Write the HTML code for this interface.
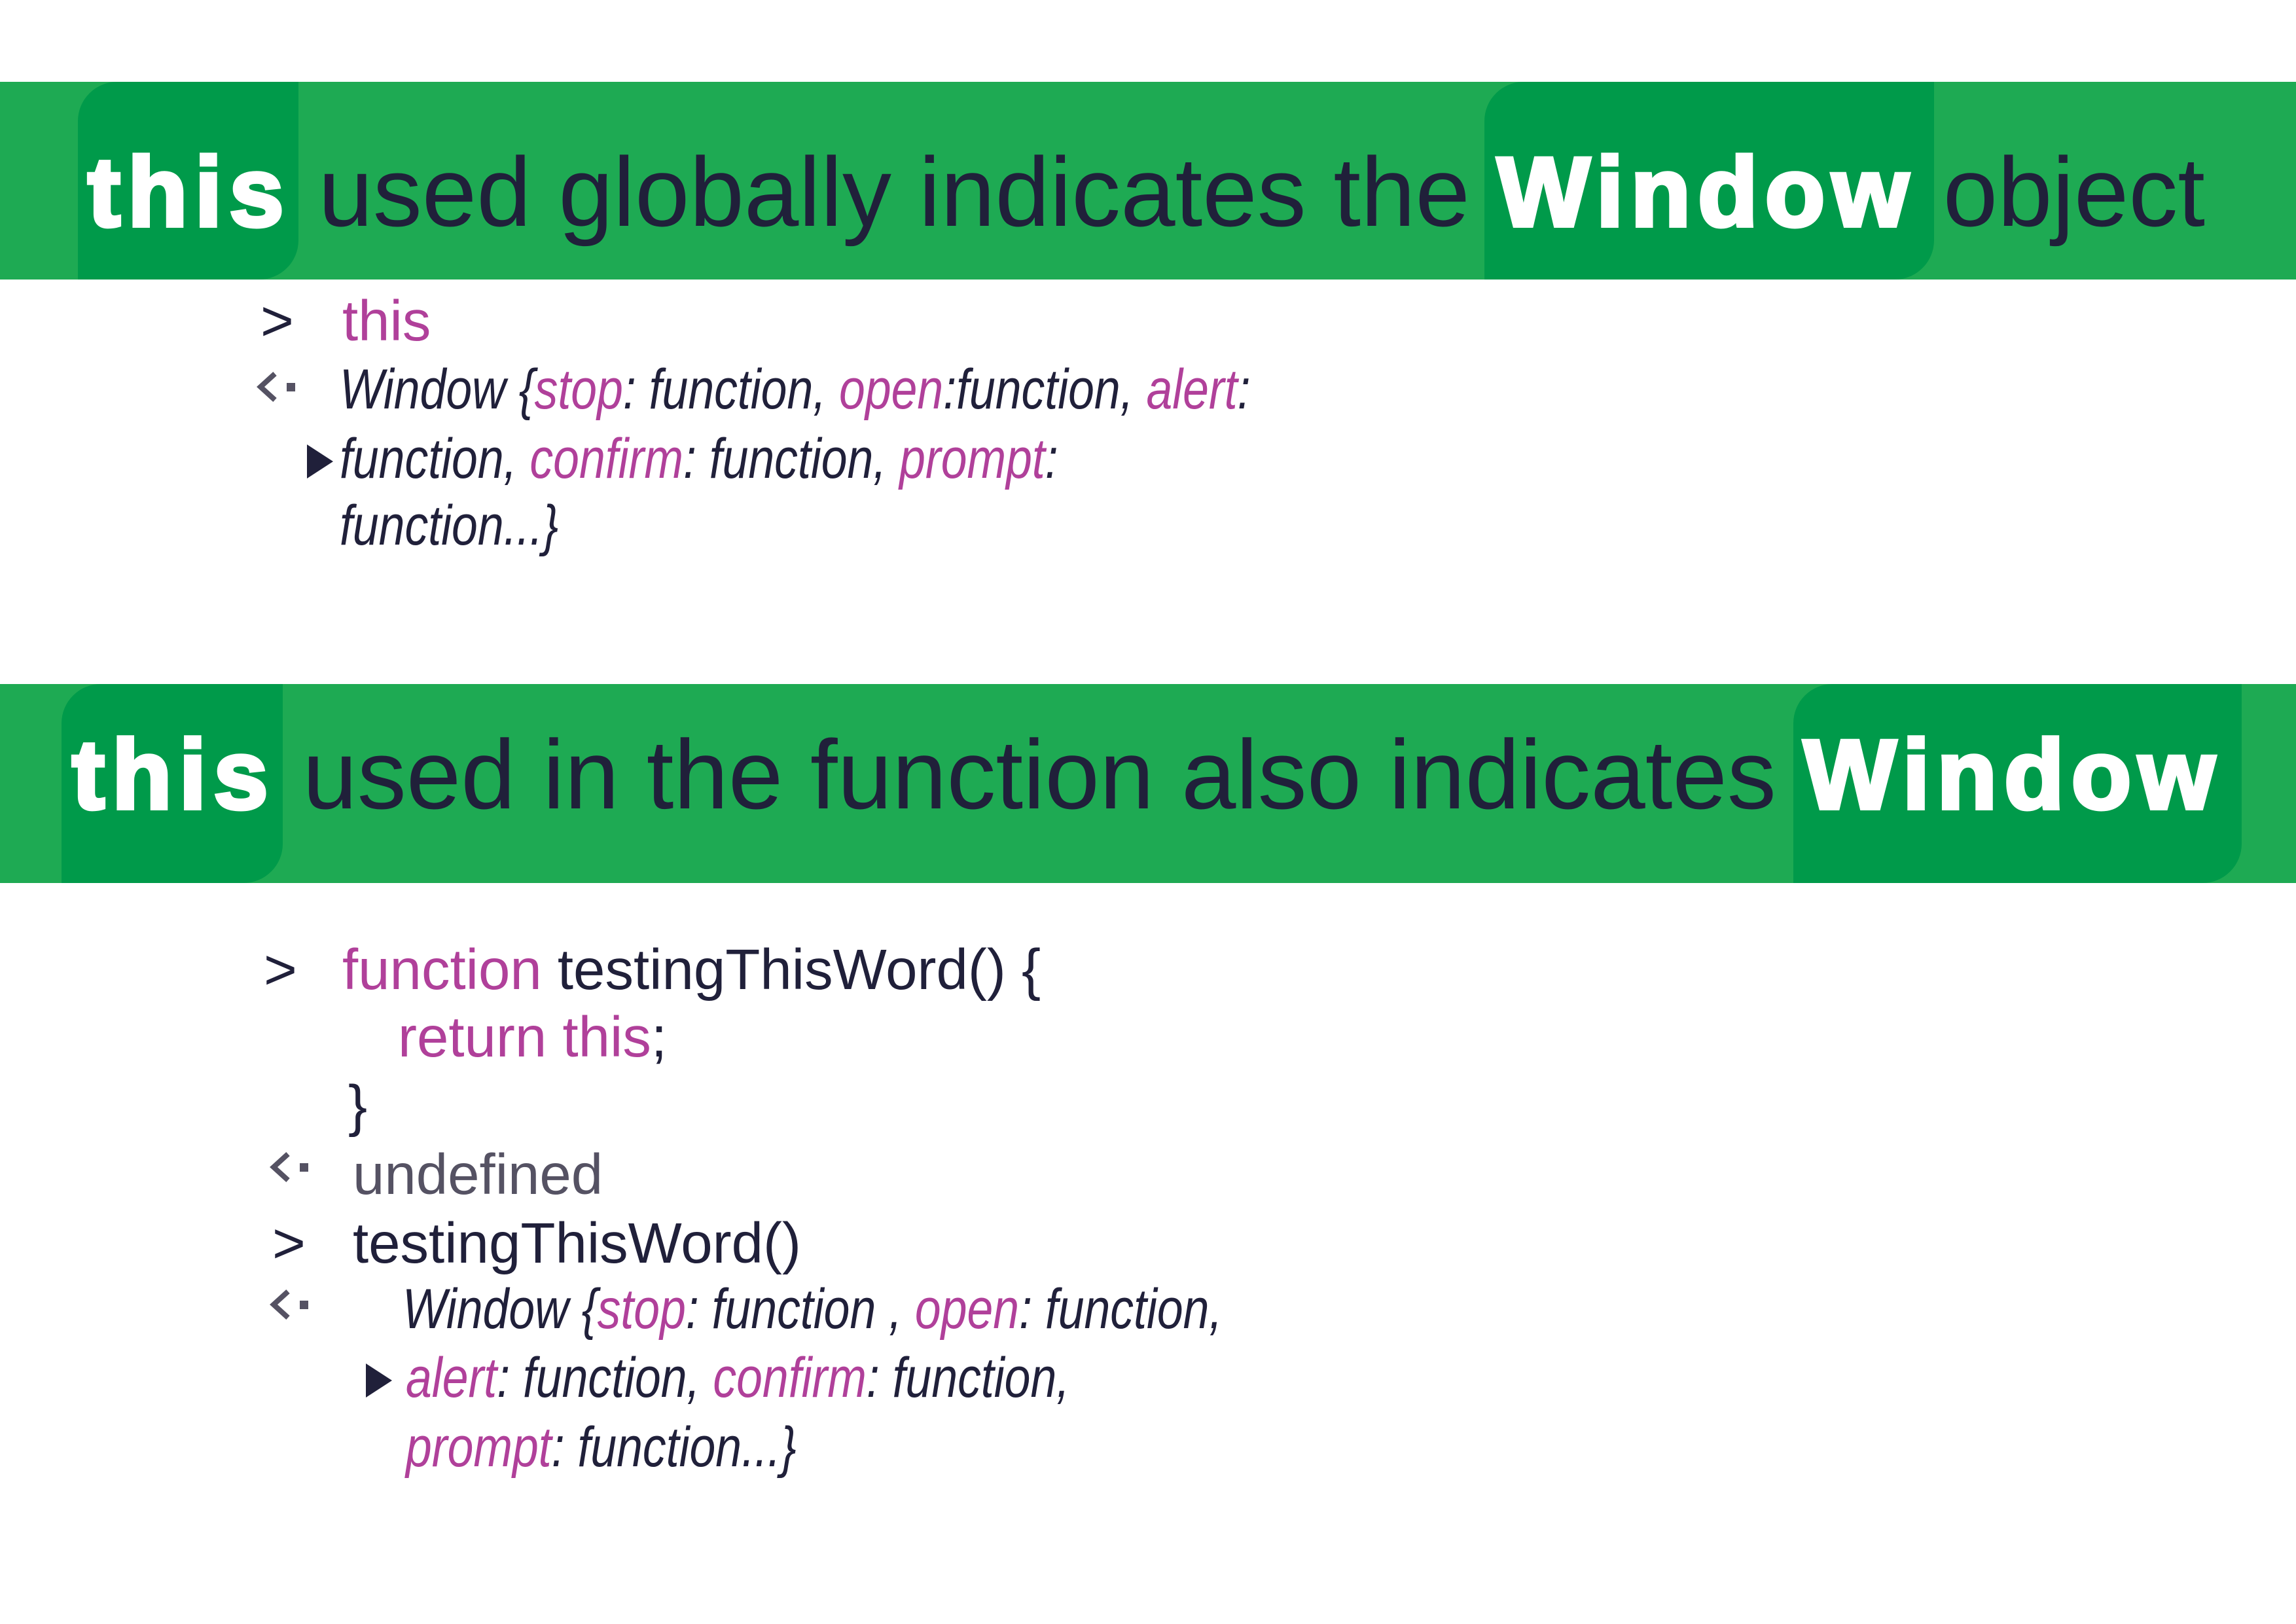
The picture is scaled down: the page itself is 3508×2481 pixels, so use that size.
<!DOCTYPE html>
<html><head><meta charset="utf-8"><style>
body{margin:0;width:3508px;height:2481px;background:#fff;position:relative;overflow:hidden;font-family:"Liberation Sans",Arial,sans-serif;color:#20203a}
.band{position:absolute;left:0;width:3508px;background:#1eaa53}
.box{position:absolute;background:#009a4a;border-radius:60px 0 60px 0}
.t{position:absolute;white-space:nowrap;line-height:1}
.title{font-size:150px;color:#20203a}
.b{font-weight:bold;color:#fff;-webkit-text-stroke:6px #fff;letter-spacing:11px}
.m{color:#b0409a}
.g{color:#555263}
.code{font-size:87px}
.it{font-size:86px;font-style:italic;transform:scaleX(0.832);transform-origin:0 0}
svg{position:absolute}
</style></head><body>
<div class="band" style="top:125px;height:302px"></div>
<div class="box" style="top:125px;left:119px;width:337px;height:302px"></div>
<div class="box" style="top:125px;left:2268px;width:687px;height:302px"></div>
<div class="t title" style="left:134px;top:218px"><span class="b">this</span> used globally indicates the <span class="b">Window</span> object</div>

<div class="band" style="top:1045px;height:304px"></div>
<div class="box" style="top:1045px;left:94px;width:338px;height:304px"></div>
<div class="box" style="top:1045px;left:2740px;width:685px;height:304px"></div>
<div class="t title" style="left:110px;top:1108px"><span class="b">this</span> used in the function also indicates <span class="b">Window</span></div>

<!-- section 1 -->
<div class="t code" style="left:398px;top:447px">&gt;</div>
<div class="t code m" style="left:523px;top:447px">this</div>
<svg style="left:390px;top:566px" width="75" height="50" viewBox="0 0 75 50"><path d="M30 5 L8 25 L30 45" stroke="#555263" stroke-width="8" fill="none"/><rect x="48" y="19" width="13" height="13" fill="#555263"/></svg>
<div class="t it" style="left:519px;top:552px">Window {<span class="m">stop</span>: function, <span class="m">open</span>:function, <span class="m">alert</span>:</div>
<svg style="left:465px;top:676px" width="50" height="58" viewBox="0 0 50 58"><path d="M4 3 L44 29 L4 55 Z" fill="#20203a"/></svg>
<div class="t it" style="left:519px;top:658px">function, <span class="m">confirm</span>: function, <span class="m">prompt</span>:</div>
<div class="t it" style="left:519px;top:760px">function...}</div>

<!-- section 2 -->
<div class="t code" style="left:403px;top:1438px">&gt;</div>
<div class="t code" style="left:523px;top:1438px"><span class="m">function</span> testingThisWord() {</div>
<div class="t code" style="left:608px;top:1541px"><span class="m">return this</span>;</div>
<div class="t code" style="left:532px;top:1646px">}</div>
<svg style="left:410px;top:1758px" width="75" height="50" viewBox="0 0 75 50"><path d="M30 5 L8 25 L30 45" stroke="#555263" stroke-width="8" fill="none"/><rect x="48" y="19" width="13" height="13" fill="#555263"/></svg>
<div class="t code g" style="left:539px;top:1751px">undefined</div>
<div class="t code" style="left:416px;top:1856px">&gt;</div>
<div class="t code" style="left:539px;top:1856px">testingThisWord()</div>
<svg style="left:410px;top:1968px" width="75" height="50" viewBox="0 0 75 50"><path d="M30 5 L8 25 L30 45" stroke="#555263" stroke-width="8" fill="none"/><rect x="48" y="19" width="13" height="13" fill="#555263"/></svg>
<div class="t it" style="left:615px;top:1957px">Window {<span class="m">stop</span>: function , <span class="m">open</span>: function,</div>
<svg style="left:555px;top:2080px" width="50" height="58" viewBox="0 0 50 58"><path d="M4 3 L44 29 L4 55 Z" fill="#20203a"/></svg>
<div class="t it" style="left:620px;top:2062px"><span class="m">alert</span>: function, <span class="m">confirm</span>: function,</div>
<div class="t it" style="left:620px;top:2168px"><span class="m">prompt</span>: function...}</div>
</body></html>
